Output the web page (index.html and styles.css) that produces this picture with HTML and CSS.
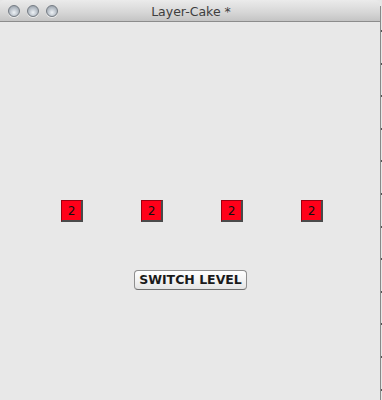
FILE: index.html
```html
<!DOCTYPE html>
<html lang="en">
<head>
    <meta charset="UTF-8">
    <title>Layer-Cake *</title>
    <link rel="stylesheet" href="styles.css">
</head>
<body>
    <div class="window">
        <div class="titlebar">
            <div class="lights">
                <span class="light"></span>
                <span class="light"></span>
                <span class="light"></span>
            </div>
            <div class="title">Layer-Cake *</div>
        </div>

        <div class="content">
            <div class="tiles">
                <button class="tile">2</button>
                <button class="tile">2</button>
                <button class="tile">2</button>
                <button class="tile">2</button>
            </div>
            <button class="switch">SWITCH LEVEL</button>
        </div>
    </div>
    <div class="edge"></div>
</body>
</html>
```

FILE: styles.css
```css
* {
    margin: 0;
    padding: 0;
    box-sizing: border-box;
}

body {
    display: flex;
    width: 382px;
    height: 400px;
    overflow: hidden;
    background: #e6e6e6;
    font-family: 'DejaVu Sans', 'Liberation Sans', sans-serif;
}

.window {
    width: 380px;
    height: 400px;
    display: flex;
    flex-direction: column;
    background: #e8e8e8;
    border-radius: 5px 5px 0 0;
    overflow: hidden;
}

/* Title bar */
.titlebar {
    height: 22px;
    position: relative;
    display: flex;
    align-items: center;
    justify-content: center;
    background: linear-gradient(#ebebeb, #d6d6d6 60%, #c4c4c4);
    border-bottom: 1px solid #8c8c8c;
}

.lights {
    position: absolute;
    left: 8px;
    top: 5px;
    display: flex;
    gap: 7px;
}

.light {
    width: 12px;
    height: 12px;
    border-radius: 50%;
    background: radial-gradient(circle at 50% 65%, #eef2f6 0%, #bfc6ce 45%, #8a939d 100%);
    border: 1px solid #747b83;
    box-shadow: 0 1px 0 rgba(255, 255, 255, 0.6);
}

.title {
    font-size: 12.5px;
    color: #3e3e3e;
    margin-left: 2px;
    margin-top: 1px;
}

/* Content */
.content {
    flex: 1;
    display: flex;
    flex-direction: column;
}

.tiles {
    display: flex;
    gap: 58px;
    margin-top: 178px;
    padding-left: 61px;
}

.tile {
    width: 22px;
    height: 22px;
    background: #ff0019;
    border: 1px solid #9a0010;
    border-right: 2px solid #4a4a4a;
    border-bottom: 2px solid #4a4a4a;
    font-family: 'DejaVu Sans', sans-serif;
    font-size: 12px;
    color: #111;
    line-height: 18px;
    text-align: center;
}

.switch {
    align-self: flex-start;
    margin: 48px 0 0 134px;
    width: 113px;
    height: 20px;
    border: 1px solid #8e8e8e;
    border-bottom-color: #6e6e6e;
    border-radius: 4px;
    background: linear-gradient(#ffffff, #f3f3f3 50%, #e4e4e4);
    font-family: 'DejaVu Sans', sans-serif;
    font-weight: bold;
    font-size: 12.5px;
    color: #1a1a1a;
    line-height: 18px;
}

.edge {
    width: 2px;
    height: 400px;
    margin-top: 6px;
    background:
        repeating-linear-gradient(#e6e6e6 0, #e6e6e6 24px, #555 24px, #555 26px, #e6e6e6 26px, #e6e6e6 32.6px),
        #888;
    background-size: 1px 100%, 2px 100%;
    background-repeat: repeat-y, no-repeat;
    border-left: 1px solid #888;
}
```
